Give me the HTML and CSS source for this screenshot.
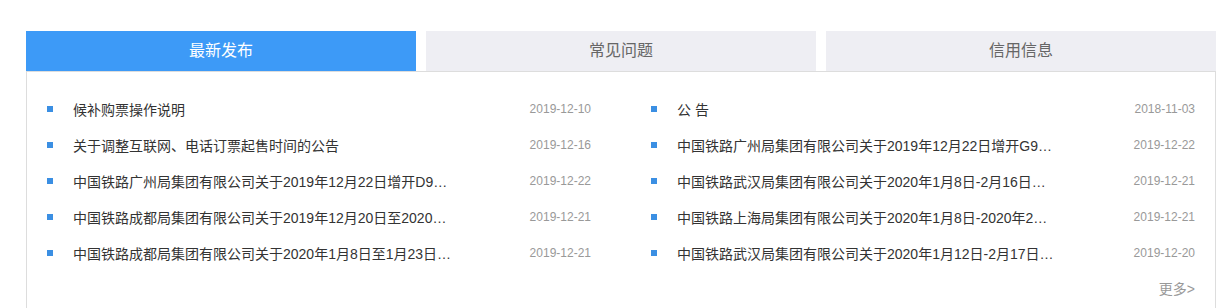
FILE: index.html
```html
<!DOCTYPE html>
<html lang="zh-CN">
  <head>
    <meta charset="utf-8">
    <title>最新发布</title>
    <link rel="stylesheet" href="styles.css">
  </head>
  <body>
    <div class="news-box">
      <div class="tabs">
        <div class="tab active">最新发布</div>
        <div class="tab">常见问题</div>
        <div class="tab">信用信息</div>
      </div>

      <div class="panel">
        <ul class="news-list">
          <li class="news-item"><span class="title">候补购票操作说明</span><span class="date">2019-12-10</span></li>
          <li class="news-item"><span class="title">公 告</span><span class="date">2018-11-03</span></li>
          <li class="news-item"><span class="title">关于调整互联网、电话订票起售时间的公告</span><span class="date">2019-12-16</span></li>
          <li class="news-item"><span class="title">中国铁路广州局集团有限公司关于2019年12月22日增开G97次列车的公告</span><span class="date">2019-12-22</span></li>
          <li class="news-item"><span class="title">中国铁路广州局集团有限公司关于2019年12月22日增开D933次列车的公告</span><span class="date">2019-12-22</span></li>
          <li class="news-item"><span class="title">中国铁路武汉局集团有限公司关于2020年1月8日-2月16日加开列车的公告</span><span class="date">2019-12-21</span></li>
          <li class="news-item"><span class="title">中国铁路成都局集团有限公司关于2019年12月20日至2020年1月加开列车的公告</span><span class="date">2019-12-21</span></li>
          <li class="news-item"><span class="title">中国铁路上海局集团有限公司关于2020年1月8日-2020年2月加开列车的公告</span><span class="date">2019-12-21</span></li>
          <li class="news-item"><span class="title">中国铁路成都局集团有限公司关于2020年1月8日至1月23日加开列车的公告</span><span class="date">2019-12-21</span></li>
          <li class="news-item"><span class="title">中国铁路武汉局集团有限公司关于2020年1月12日-2月17日加开列车的公告</span><span class="date">2019-12-20</span></li>
        </ul>
        <div class="more"><a href="#">更多&gt;</a></div>
      </div>
    </div>
  </body>
</html>
```

FILE: styles.css
```css
* {
  margin: 0;
  padding: 0;
  box-sizing: border-box;
}

body {
  font-family: "Liberation Sans", "Noto Sans CJK SC", sans-serif;
  background: #fff;
  color: #333;
}

.news-box {
  width: 1190px;
  margin: 31px 0 0 26px;
}

.tabs {
  display: flex;
  gap: 10px;
}

.tab {
  flex: 1;
  height: 40px;
  line-height: 40px;
  text-align: center;
  font-size: 16px;
  color: #666;
  background: #eeeef3;
}

.tab.active {
  background: #3d9af7;
  color: #fff;
}

.panel {
  border: 1px solid #ddd;
  padding: 19px 20px 0;
  height: 260px;
}

.news-list {
  list-style: none;
  display: grid;
  grid-template-columns: 1fr 1fr;
  column-gap: 60px;
}

.news-item {
  display: flex;
  align-items: center;
  height: 36px;
  font-size: 14px;
}

.news-item::before {
  content: "";
  width: 6px;
  height: 6px;
  background: #3b8fe3;
  margin-right: 20px;
  flex-shrink: 0;
}

.title {
  max-width: 379px;
  white-space: nowrap;
  overflow: hidden;
  text-overflow: ellipsis;
}

.date {
  margin-left: auto;
  font-size: 12px;
  color: #999;
}

.more {
  text-align: right;
  line-height: 36px;
  font-size: 14px;
}

.more a {
  color: #999;
  text-decoration: none;
}
```
